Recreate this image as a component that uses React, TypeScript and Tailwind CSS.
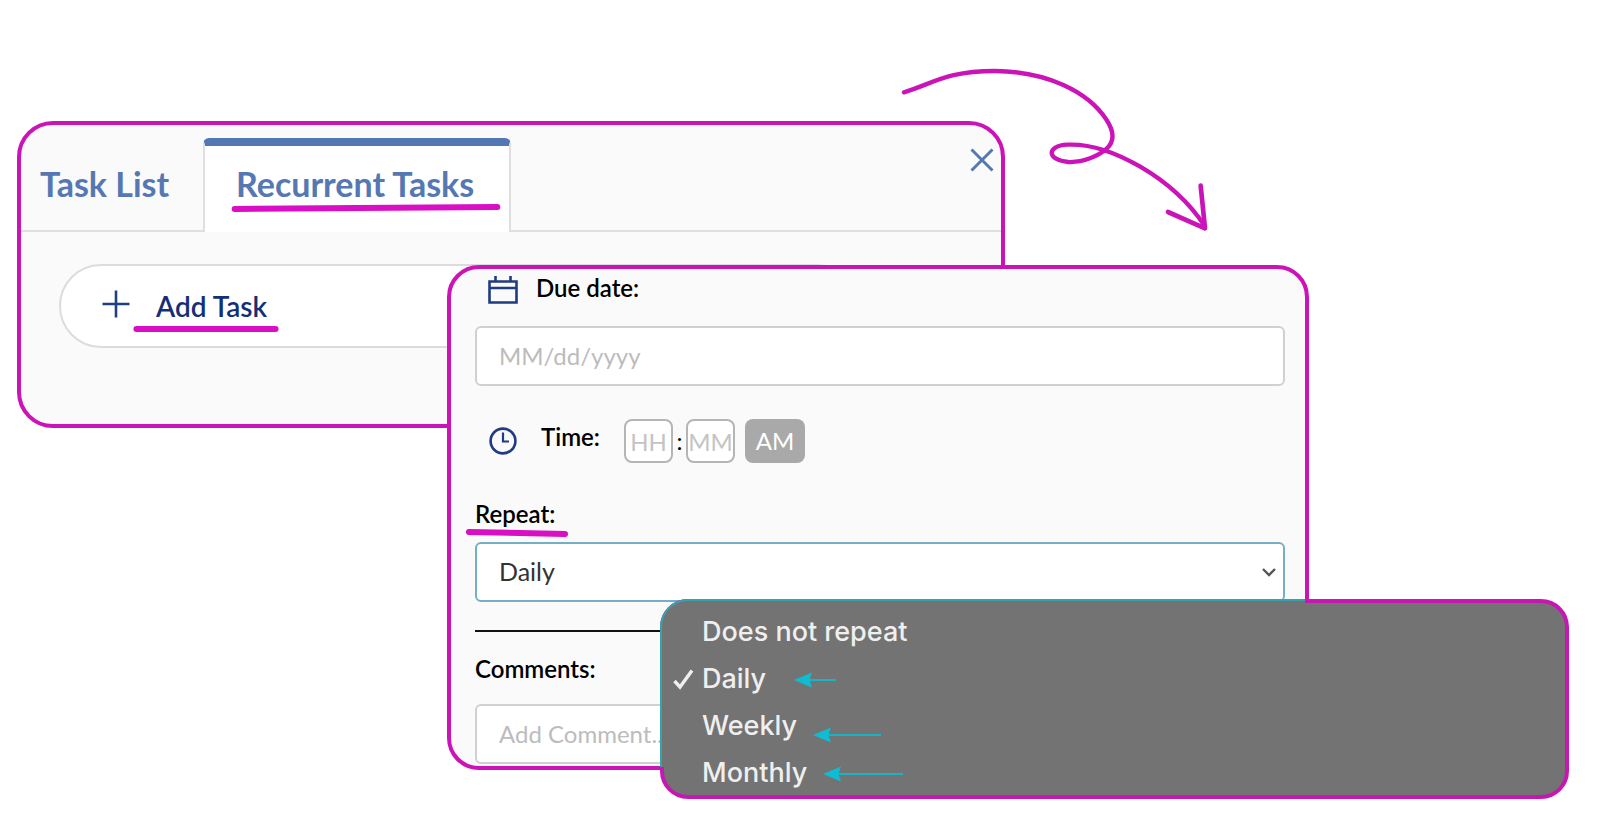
// src/App.tsx
import React, { useState } from "react";

const OPTIONS = [
  { label: "Does not repeat", arrow: 0 },
  { label: "Daily", arrow: 42 },
  { label: "Weekly", arrow: 68 },
  { label: "Monthly", arrow: 80 },
];

type UnderlineProps = {
  className: string;
  tilt?: number;
};

// Hand-drawn marker line under a label
const Underline = ({ className, tilt = 0 }: UnderlineProps) => (
  <svg
    className={`absolute h-2 overflow-visible pointer-events-none ${className}`}
    viewBox="0 0 100 8"
    preserveAspectRatio="none"
    aria-hidden="true"
  >
    <path
      d={`M1 ${4 - tilt}L99 ${4 + tilt}`}
      fill="none"
      stroke="#d80fc4"
      strokeWidth="6"
      strokeLinecap="round"
      vectorEffect="non-scaling-stroke"
    />
  </svg>
);

const CalendarIcon = () => (
  <svg className="w-[30px] h-[28px]" viewBox="0 0 30 28" fill="none" stroke="#1f3b82" strokeWidth="2.6" aria-hidden="true">
    <path d="M1.5 5.5h27v21h-27zM1.5 12h27M7.5 0v5.5M22.5 0v5.5" />
  </svg>
);

const ClockIcon = () => (
  <svg className="w-[28px] h-[28px]" viewBox="0 0 28 28" fill="none" stroke="#1f3b82" strokeWidth="2.6" aria-hidden="true">
    <circle cx="14" cy="14" r="12.4" />
    <path d="M14 5.5v9h6" strokeWidth="2.2" />
  </svg>
);

const PointerArrow = ({ length }: { length: number }) => (
  <svg width={length} height="16" viewBox={`0 0 ${length} 16`} aria-hidden="true">
    <path d={`M12 8H${length}`} stroke="#18b4c6" strokeWidth="2" />
    <path d="M0 8L18 0.5L15.5 8L18 15.5Z" fill="#10bcd2" />
  </svg>
);

const TaskPanel = () => (
  <section className="ml-[17px] mr-[595px] h-[307px] rounded-[36px] border-4 border-[#cb14b8] bg-[#fafafa] overflow-hidden">
    <div className="flex h-[107px] pt-[13px]">
      <button className="w-[182px] pl-[19px] pb-[2px] text-left text-[34px] font-bold text-[#5578b3] border-b-2 border-[#dfdfdf] whitespace-nowrap">
        Task List
      </button>
      <button className="relative w-[308px] pl-[31px] pb-[12px] text-left text-[34px] font-bold text-[#5578b3] bg-white border-x-2 border-x-[#dfdfdf] border-t-8 border-t-[#5278b4] rounded-t-md whitespace-nowrap">
        Recurrent Tasks
        <Underline className="left-[27px] top-[58px] w-[268px]" tilt={-1} />
      </button>
      <div className="flex-1 flex justify-end items-start pr-[7px] border-b-2 border-[#dfdfdf]">
        <button aria-label="Close" className="mt-[10px]">
          <svg width="24" height="24" viewBox="0 0 24 24" fill="none" stroke="#5578b3" strokeWidth="3" aria-hidden="true">
            <path d="M1.5 1.5l21 21M22.5 1.5l-21 21" />
          </svg>
        </button>
      </div>
    </div>
    <button className="relative mt-[32px] ml-[38px] w-[800px] h-[84px] flex items-center rounded-full border-2 border-[#dcdcdc] bg-white pl-[41px] text-[28px] font-semibold text-[#142f75]">
      <svg className="mb-[4px]" width="28" height="28" viewBox="0 0 28 28" stroke="#1f3f80" strokeWidth="2.6" aria-hidden="true">
        <path d="M14 0.5v27M0.5 14h27" />
      </svg>
      <span className="ml-[26px]">Add Task</span>
      <Underline className="left-[74px] top-[59px] w-[142px]" />
    </button>
  </section>
);

type RepeatMenuProps = {
  value: string;
  onChange: (value: string) => void;
};

const RepeatMenu = ({ value, onChange }: RepeatMenuProps) => (
  <div className="absolute left-[185px] right-[-284px] top-[57px] h-[200px] rounded-[28px] border-4 border-[#c617b3] bg-[#737373]">
    {/* teal edge where the menu lies over the form */}
    <div className="absolute -left-1 -top-1 right-[260px] h-[168px] rounded-tl-[28px] border-l-2 border-t-2 border-[#35a3ab] bg-[#737373]" />
    <ul className="relative pt-[6px]">
      {OPTIONS.map((option) => (
        <li key={option.label} className="flex items-center h-[47px]">
          <button
            onClick={() => onChange(option.label)}
            className="flex items-center pl-[9px] font-['Inter',sans-serif] text-[27px] font-medium text-[#efefef] whitespace-nowrap"
          >
            <span className="w-[29px]">
              {value === option.label && (
                <svg width="21" height="21" viewBox="0 0 21 21" fill="none" stroke="#efefef" strokeWidth="3.4" aria-hidden="true">
                  <path d="M1.5 12l5.5 6L19 1.5" />
                </svg>
              )}
            </span>
            {option.label}
          </button>
          {option.arrow > 0 && (
            <span className={option.label === "Weekly" ? "ml-4 mt-4" : option.label === "Monthly" ? "ml-4" : "ml-7"}>
              <PointerArrow length={option.arrow} />
            </span>
          )}
        </li>
      ))}
    </ul>
  </div>
);

const RecurrentForm = () => {
  const [repeat, setRepeat] = useState("Daily");

  return (
    <section className="relative -mt-[163px] ml-[447px] mr-[291px] h-[505px] rounded-[32px] border-4 border-[#cb14b8] bg-[#fafafa] pl-6 pr-5 text-[24px] text-black">
      <div className="flex items-center h-[40px] pl-[13px] pt-[2px] gap-[18px]">
        <CalendarIcon />
        <label htmlFor="due" className="font-semibold leading-[28px] pb-[4px]">Due date:</label>
      </div>
      <input
        id="due"
        type="text"
        placeholder="MM/dd/yyyy"
        className="block mt-[17px] w-full h-[60px] rounded-md border-2 border-[#d0d0d0] bg-white px-[22px] pb-[2px] text-[24px] placeholder:text-[#bcbcbc]"
      />

      <div className="flex items-center mt-[33px] h-[44px] pl-[14px]">
        <ClockIcon />
        <label htmlFor="hours" className="ml-[24px] w-[83px] pb-[8px] font-semibold">Time:</label>
        <input
          id="hours"
          type="text"
          placeholder="HH"
          className="w-[49px] h-[44px] rounded-lg border-2 border-[#b5b5b5] bg-white text-center text-[24px] placeholder:text-[#c4c4c4]"
        />
        <span className="w-[13px] text-center">:</span>
        <input
          aria-label="Minutes"
          type="text"
          placeholder="MM"
          className="w-[49px] h-[44px] rounded-lg border-2 border-[#b5b5b5] bg-white text-center text-[24px] placeholder:text-[#c4c4c4]"
        />
        <button className="ml-[10px] w-[60px] h-[44px] rounded-lg bg-[#a9a9a9] text-[24px] text-white">AM</button>
      </div>

      <div className="relative mt-[33px] h-[46px]">
        <label htmlFor="repeat" className="font-semibold">Repeat:</label>
        <Underline className="-left-[7px] top-[33px] w-[98px]" tilt={1} />
      </div>
      <div className="relative z-10">
        <select
          id="repeat"
          value={repeat}
          onChange={(e) => setRepeat(e.target.value)}
          className="block w-full h-[60px] appearance-none rounded-md border-2 border-[#74afc6] bg-white px-[22px] text-[25px] text-[#333]"
        >
          {OPTIONS.map((option) => (
            <option key={option.label}>{option.label}</option>
          ))}
        </select>
        <svg className="absolute right-[9px] top-[26px] pointer-events-none" width="14" height="9" viewBox="0 0 14 9" fill="none" stroke="#555" strokeWidth="2.4" aria-hidden="true">
          <path d="M1 1l6 6 6-6" />
        </svg>
        <RepeatMenu value={repeat} onChange={setRepeat} />
      </div>

      <hr className="mt-[28px] border-t-2 border-[#111]" />
      <label htmlFor="comment" className="block mt-[19px] font-semibold">Comments:</label>
      <textarea
        id="comment"
        rows={1}
        placeholder="Add Comment..."
        className="block mt-[17px] w-full h-[60px] resize-none rounded-md border-2 border-[#d0d0d0] bg-white px-[22px] py-[10px] text-[24px] placeholder:text-[#bcbcbc]"
      />
    </section>
  );
};

// Curly arrow going from the task panel to the form
const CurlyArrow = () => (
  <svg
    className="absolute right-[360px] top-[50px] w-[360px] h-[240px] pointer-events-none"
    viewBox="0 0 1080 720"
    fill="none"
    stroke="#cb14b8"
    strokeWidth="13"
    strokeLinecap="round"
    strokeLinejoin="round"
    aria-hidden="true"
  >
    <path d="M72 127C160 100 200 63 345 63C500 64 625 125 680 210C704 247 703 275 680 296C655 318 610 338 565 336C500 331 498 287 562 284C690 278 880 385 974 528" />
    <path d="M962 407L975 535L864 486" strokeWidth="14" />
  </svg>
);

export default function App() {
  return (
    <main className="relative min-h-screen bg-white pt-[121px] overflow-hidden font-['Lato',sans-serif]">
      <TaskPanel />
      <RecurrentForm />
      <CurlyArrow />
    </main>
  );
}
